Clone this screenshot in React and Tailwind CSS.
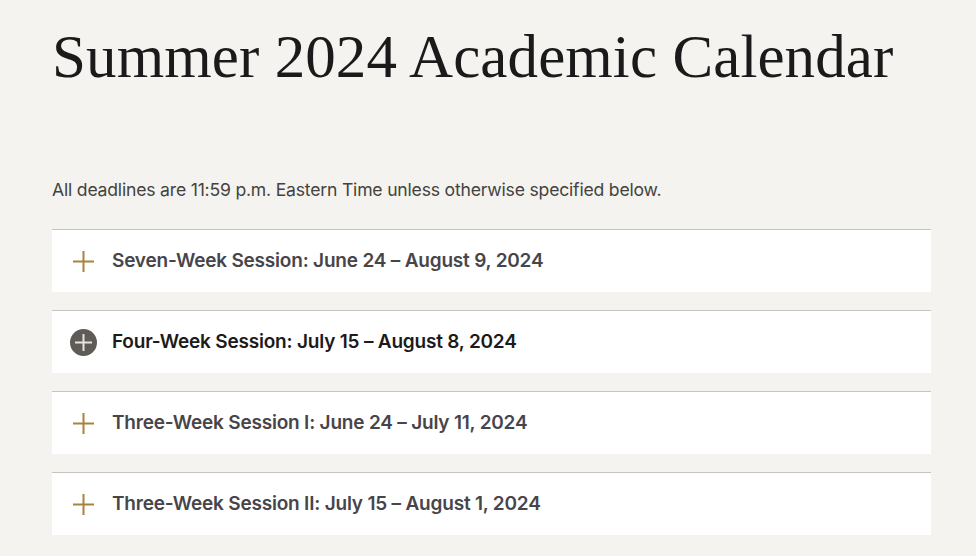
const sessions = [
  { title: "Seven-Week Session: June 24 – August 9, 2024", active: false },
  { title: "Four-Week Session: July 15 – August 8, 2024", active: true },
  { title: "Three-Week Session I: June 24 – July 11, 2024", active: false },
  { title: "Three-Week Session II: July 15 – August 1, 2024", active: false }
];

const PlusIcon = ({ active }) =>
  active ? (
    <span className="flex h-[27px] w-[27px] items-center justify-center rounded-full bg-[#5f5b57]">
      <svg width="17" height="17" viewBox="0 0 17 17">
        <path d="M8.5 0v17M0 8.5h17" stroke="#e8e2d8" strokeWidth="2" />
      </svg>
    </span>
  ) : (
    <span className="flex h-[27px] w-[27px] items-center justify-center">
      <svg width="21" height="21" viewBox="0 0 21 21">
        <path d="M10.5 0v21M0 10.5h21" stroke="#a8843f" strokeWidth="2" />
      </svg>
    </span>
  );

const App = () => {
  return (
    <div className="min-h-[556px] bg-[#f4f3ef] px-[52px] pt-[21px] pb-4 font-['Inter',sans-serif]">
      <h1 className="font-['Liberation_Serif',serif] text-[61px] leading-[72px] font-normal text-[#1a1a1a] tracking-[0.1px]">
        Summer 2024 Academic Calendar
      </h1>
      <p className="mt-[85px] text-[17.6px] leading-6 text-[#444240] tracking-[-0.2px]">
        All deadlines are 11:59 p.m. Eastern Time unless otherwise specified below.
      </p>
      <div className="mt-[27px] flex w-[879px] flex-col gap-[18px]">
        {sessions.map((s, i) => (
          <div
            key={i}
            className="flex h-[63px] items-center gap-[15px] border-t border-[#c7c4bf] bg-white pl-[18px]"
          >
            <PlusIcon active={s.active} />
            <span
              className={
                s.active
                  ? "text-[19px] font-semibold text-[#1c1b1a] tracking-[-0.2px]"
                  : "text-[19px] font-semibold text-[#48454a] tracking-[-0.2px]"
              }
            >
              {s.title}
            </span>
          </div>
        ))}
      </div>
    </div>
  );
};

export default App;
